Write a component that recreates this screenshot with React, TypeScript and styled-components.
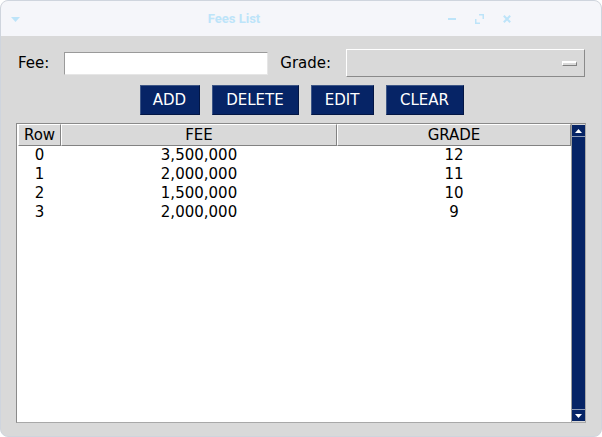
import { createGlobalStyle, styled } from "styled-components";

const ROWS = [
  { fee: "3,500,000", grade: "12" },
  { fee: "2,000,000", grade: "11" },
  { fee: "1,500,000", grade: "10" },
  { fee: "2,000,000", grade: "9" },
];

const BUTTONS = [
  { label: "ADD", width: 60 },
  { label: "DELETE", width: 87 },
  { label: "EDIT", width: 63 },
  { label: "CLEAR", width: 78 },
];

const NAVY = "#062466";
const TITLE_BLUE = "#bde4f9";

export default function App() {
  return (
    <>
      <GlobalStyle />
      <Window>
        <TitleBar>
          <MenuIcon width="9" height="5" viewBox="0 0 9 5">
            <path d="M0 0H9L4.5 5Z" fill={TITLE_BLUE} />
          </MenuIcon>
          <Title>Fees List</Title>
          <Controls>
            <svg width="8" height="10" viewBox="0 0 8 10">
              <rect x="0" y="4" width="8" height="2" fill={TITLE_BLUE} />
            </svg>
            <svg width="9" height="10" viewBox="0 0 9 10">
              <path d="M4 0H9V5H7.5V1.5H4Z M0 5H1.5V8.5H5V10H0Z" fill={TITLE_BLUE} />
            </svg>
            <svg width="8" height="8" viewBox="0 0 8 8">
              <path d="M0.8 0.8L7.2 7.2M7.2 0.8L0.8 7.2" stroke={TITLE_BLUE} strokeWidth="2" />
            </svg>
          </Controls>
        </TitleBar>

        <Body>
          <FormRow>
            <Label>Fee:</Label>
            <Entry />
            <Label $gap={12}>Grade:</Label>
            <Combo>
              <ComboKnob />
            </Combo>
          </FormRow>

          <ButtonRow>
            {BUTTONS.map((b) => (
              <ActionButton key={b.label} $width={b.width}>
                {b.label}
              </ActionButton>
            ))}
          </ButtonRow>

          <TableFrame>
            <TreeArea>
              <HeaderRow>
                <HeaderCell $width={43}>Row</HeaderCell>
                <HeaderCell $width={276}>FEE</HeaderCell>
                <HeaderCell $width={234}>GRADE</HeaderCell>
              </HeaderRow>
              {ROWS.map((r, i) => (
                <DataRow key={i}>
                  <DataCell $width={43}>{i}</DataCell>
                  <DataCell $width={276}>{r.fee}</DataCell>
                  <DataCell $width={234}>{r.grade}</DataCell>
                </DataRow>
              ))}
            </TreeArea>
            <ScrollBar>
              <ArrowButton $top>
                <svg width="7" height="4" viewBox="0 0 7 4">
                  <path d="M0 4H7L3.5 0Z" fill="#fff" />
                </svg>
              </ArrowButton>
              <Trough />
              <ArrowButton>
                <svg width="7" height="4" viewBox="0 0 7 4">
                  <path d="M0 0H7L3.5 4Z" fill="#fff" />
                </svg>
              </ArrowButton>
            </ScrollBar>
          </TableFrame>
        </Body>
      </Window>
    </>
  );
}

const GlobalStyle = createGlobalStyle`
  body {
    margin: 0;
    background: #ffffff;
    font-family: "DejaVu Sans", sans-serif;
  }
`;

const Window = styled.div`
  width: 602px;
  height: 437px;
  box-sizing: border-box;
  display: flex;
  flex-direction: column;
  border: 1px solid #cfd5de;
  border-radius: 8px;
  overflow: hidden;
  background: #d9d9d9;
`;

const TitleBar = styled.div`
  height: 35px;
  flex-shrink: 0;
  display: flex;
  align-items: center;
  padding: 0 90px 0 10px;
  background: #f5f6fa;
`;

const MenuIcon = styled.svg`
  display: block;
  margin-top: 1px;
`;

const Title = styled.div`
  flex: 1;
  text-align: center;
  font-family: Roboto, sans-serif;
  font-weight: 700;
  font-size: 13px;
  color: ${TITLE_BLUE};
`;

const Controls = styled.div`
  display: flex;
  align-items: center;
  gap: 19px;

  svg {
    display: block;
  }
`;

const Body = styled.div`
  flex: 1;
  display: flex;
  flex-direction: column;
  padding: 13px 15px 12px 15px;
`;

const FormRow = styled.div`
  display: flex;
  align-items: center;
  height: 28px;
  padding-left: 2px;
`;

const Label = styled.span<{ $gap?: number }>`
  margin-left: ${(p) => p.$gap ?? 0}px;
  font-size: 15px;
  color: #000;
`;

const Entry = styled.div`
  width: 204px;
  height: 23px;
  margin-left: 15px;
  box-sizing: border-box;
  background: #fff;
  border: 1px solid #fff;
  border-top-color: #9a9a9a;
  border-left-color: #9a9a9a;
  border-right-color: #e6e6e6;
  border-bottom-color: #e6e6e6;
`;

const Combo = styled.div`
  width: 239px;
  height: 28px;
  margin-left: 15px;
  box-sizing: border-box;
  display: flex;
  align-items: center;
  justify-content: flex-end;
  padding-right: 7px;
  background: #d9d9d9;
  border: 1px solid #8a8a8a;
  border-top-color: #ffffff;
  border-left-color: #ffffff;
`;

const ComboKnob = styled.div`
  width: 15px;
  height: 5px;
  box-sizing: border-box;
  background: #d9d9d9;
  border: 1px solid #808080;
  border-top: 2px solid #ffffff;
  border-left: 1px solid #ffffff;
`;

const ButtonRow = styled.div`
  display: flex;
  justify-content: center;
  gap: 12px;
  margin-top: 8px;
  padding-left: 1px;
`;

const ActionButton = styled.button<{ $width: number }>`
  width: ${(p) => p.$width}px;
  height: 30px;
  padding: 0;
  background: ${NAVY};
  color: #fff;
  font-family: "DejaVu Sans", sans-serif;
  font-size: 15px;
  border: 1px solid #3d5686;
  border-right-color: #031644;
  border-bottom-color: #031644;
  border-radius: 0;
`;

const TableFrame = styled.div`
  margin-top: 8px;
  width: 570px;
  height: 300px;
  box-sizing: border-box;
  display: flex;
  background: #fff;
  border: 1px solid #a8a8a8;
  border-top-color: #8a8a8a;
  border-left-color: #8a8a8a;
`;

const TreeArea = styled.div`
  flex: 1;
  padding: 0 0 0 1px;
`;

const HeaderRow = styled.div`
  display: flex;
  height: 22px;
`;

const HeaderCell = styled.div<{ $width: number }>`
  width: ${(p) => p.$width}px;
  box-sizing: border-box;
  display: flex;
  align-items: center;
  justify-content: center;
  background: #d9d9d9;
  font-size: 15px;
  color: #000;
  border-top: 1px solid #ffffff;
  border-left: 1px solid #ffffff;
  border-right: 1px solid #828282;
  border-bottom: 1px solid #828282;
`;

const DataRow = styled.div`
  display: flex;
  height: 19px;
  &:first-of-type {
    margin-top: 1px;
  }
`;

const DataCell = styled.div<{ $width: number }>`
  width: ${(p) => p.$width}px;
  text-align: center;
  font-size: 15px;
  line-height: 19px;
  color: #000;
`;

const ScrollBar = styled.div`
  width: 14px;
  display: flex;
  flex-direction: column;
  background: ${NAVY};
  border-left: 1px solid #9c9c9c;
`;

const ArrowButton = styled.div<{ $top?: boolean }>`
  height: 11px;
  display: flex;
  align-items: center;
  justify-content: center;
  background: ${NAVY};
  border-top: ${(p) => (p.$top ? "1px solid #d9d9d9" : "1px solid #8e9cb8")};
  border-bottom: ${(p) => (p.$top ? "1px solid #8e9cb8" : "1px solid #d9d9d9")};

  svg {
    display: block;
  }
`;

const Trough = styled.div`
  flex: 1;
`;
